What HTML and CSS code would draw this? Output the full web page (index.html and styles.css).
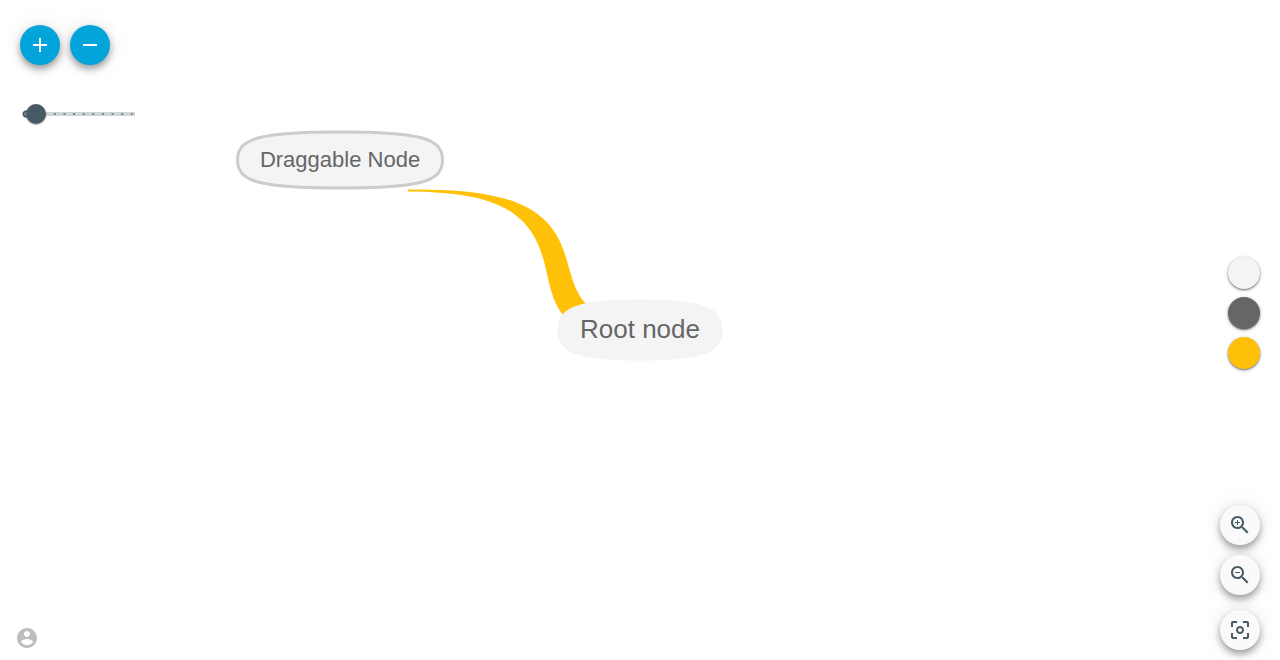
FILE: index.html
```html
<!DOCTYPE html>
<html lang="en">
<head>
<meta charset="utf-8">
<title>Mind map</title>
<meta name="viewport" content="width=device-width, initial-scale=1">
<link rel="stylesheet" href="styles.css">
</head>
<body>
<main class="app">
  <svg class="map" role="img" aria-label="Mind map">
    <svg class="map-origin" x="50%" y="50%">
      <path class="branch" d="M-232 -140.500C-162 -141 -114 -134 -89 -103C-69 -78 -73 -46 -54 -26L-60 0L-77 -15C-94 -37 -90 -62 -104 -90C-123 -128 -166 -138 -232 -138.500Z"/>
      <g class="node">
        <path class="node-shape" d="M-82.500 0C-82.500 -23 -62 -30.500 0 -30.500S82.500 -23 82.500 0S62 30.500 0 30.500S-82.500 23 -82.500 0Z"/>
        <text class="node-text root-text" x="0" y="8">Root node</text>
      </g>
      <g class="node">
        <path class="node-shape selected" d="M-402.500 -170C-402.500 -192 -380 -198 -300 -198S-197.500 -192 -197.500 -170S-220 -142 -300 -142S-402.500 -148 -402.500 -170Z"/>
        <text class="node-text" x="-300" y="-163">Draggable Node</text>
      </g>
    </svg>
  </svg>

  <div class="side left">
    <div class="tools">
      <div class="button-row">
        <button class="fab primary" aria-label="Add node"><svg class="icon" viewBox="0 0 24 24"><path d="M19 13h-6v6h-2v-6H5v-2h6V5h2v6h6v2z"/></svg></button>
        <button class="fab primary" aria-label="Remove node"><svg class="icon" viewBox="0 0 24 24"><path d="M19 13H5v-2h14v2z"/></svg></button>
      </div>
      <div class="slider"><input class="range" type="range" min="0" max="10" step="1" value="0" aria-label="Branch width"></div>
    </div>
    <button class="account" aria-label="Account"><svg class="icon" viewBox="0 0 24 24"><path d="M12 2C6.480 2 2 6.480 2 12s4.480 10 10 10 10-4.480 10-10S17.520 2 12 2zm0 3c1.660 0 3 1.340 3 3s-1.340 3-3 3-3-1.340-3-3 1.340-3 3-3zm0 14.200c-2.500 0-4.710-1.280-6-3.220.030-1.990 4-3.080 6-3.080 1.990 0 5.970 1.090 6 3.080-1.290 1.940-3.500 3.220-6 3.220z"/></svg></button>
  </div>

  <div class="side right">
    <div class="colors">
      <button class="swatch fill" aria-label="Node color"></button>
      <button class="swatch ink" aria-label="Text color"></button>
      <button class="swatch line" aria-label="Branch color"></button>
    </div>
    <div class="zoom">
      <button class="fab" aria-label="Zoom in"><svg class="icon" viewBox="0 0 24 24"><path d="M15.500 14h-.79l-.28-.27C15.410 12.590 16 11.110 16 9.500 16 5.910 13.090 3 9.500 3S3 5.910 3 9.500 5.910 16 9.500 16c1.610 0 3.090-.59 4.230-1.570l.27.28v.79l5 4.990L20.490 19l-4.990-5zm-6 0C7.010 14 5 11.990 5 9.500S7.010 5 9.500 5 14 7.010 14 9.500 11.990 14 9.500 14zM12 10h-2v2H9v-2H7V9h2V7h1v2h2v1z"/></svg></button>
      <button class="fab" aria-label="Zoom out"><svg class="icon" viewBox="0 0 24 24"><path d="M15.500 14h-.79l-.28-.27C15.410 12.590 16 11.110 16 9.500 16 5.910 13.090 3 9.500 3S3 5.910 3 9.500 5.910 16 9.500 16c1.610 0 3.090-.59 4.230-1.570l.27.28v.79l5 4.990L20.490 19l-4.990-5zm-6 0C7.010 14 5 11.990 5 9.500S7.010 5 9.500 5 14 7.010 14 9.500 11.990 14 9.500 14zM7 9h5v1H7z"/></svg></button>
      <button class="fab center" aria-label="Center map"><svg class="icon" viewBox="0 0 24 24"><path d="M5 15H3v4c0 1.100.9 2 2 2h4v-2H5v-4zM5 5h4V3H5c-1.100 0-2 .9-2 2v4h2V5zm14-2h-4v2h4v4h2V5c0-1.100-.9-2-2-2zm0 16h-4v2h4c1.100 0 2-.9 2-2v-4h-2v4zM12 8c-2.210 0-4 1.790-4 4s1.790 4 4 4 4-1.790 4-4-1.790-4-4-4zm0 6c-1.100 0-2-.9-2-2s.9-2 2-2 2 .9 2 2-.9 2-2 2z"/></svg></button>
    </div>
  </div>
</main>
</body>
</html>
```
FILE: styles.css
```css
* {
  box-sizing: border-box;
}

body {
  margin: 0;
  background: #fff;
  font-family: "Liberation Sans", Arial, sans-serif;
}

button {
  padding: 0;
  border: 0;
  cursor: pointer;
}

.app {
  position: relative;
  display: flex;
  justify-content: space-between;
  min-height: 100vh;
  overflow: hidden;
}

/* The map lies under the tools and keeps its origin at the window's centre. */
.map {
  position: absolute;
  inset: 0;
  width: 100%;
  height: 100%;
}

.map-origin {
  overflow: visible;
}

.branch {
  fill: #ffc107;
}

.node-shape {
  fill: #f4f4f4;
}

.node-shape.selected {
  stroke: #ccc;
  stroke-width: 3px;
}

.node-text {
  fill: #666;
  font-size: 22px;
  text-anchor: middle;
}

.root-text {
  font-size: 26px;
}

.side {
  position: relative;
}

.left {
  display: flex;
  flex-direction: column;
  justify-content: space-between;
  padding: 25px 15px 10px;
}

.tools {
  padding-left: 5px;
}

.button-row {
  display: flex;
  gap: 10px;
}

.fab {
  display: flex;
  align-items: center;
  justify-content: center;
  width: 40px;
  height: 40px;
  border-radius: 50%;
  background: #fafafa;
  color: #455a64;
  box-shadow: 0 4px 7px rgba(0, 0, 0, .36), 0 0 20px rgba(0, 0, 0, .1);
}

.primary {
  background: #03a4d9;
  color: #fff;
}

.icon {
  display: block;
  width: 24px;
  height: 24px;
  fill: currentColor;
}

.slider {
  display: flex;
  width: 115px;
  margin-top: 39px;
  padding-left: 6px;
  background: radial-gradient(circle at 6px 50%, #9aa5aa 1px, #455a64 2px, #455a64 3px, transparent 4px);
}

.range {
  width: 100%;
  height: 20px;
  margin: 0;
  padding-right: 2px;
  appearance: none;
  background:
    linear-gradient(90deg, #7b898f 2px, transparent 2px) -1px 50% / 9% 2px repeat-x content-box border-box,
    linear-gradient(#d0d6d8, #d0d6d8) 0 50% / 100% 4px no-repeat border-box;
}

.range::-webkit-slider-thumb {
  width: 20px;
  height: 20px;
  appearance: none;
  border-radius: 50%;
  background: #455a64;
  box-shadow: 0 1px 2px rgba(0, 0, 0, .3);
}

.account {
  width: 24px;
  background: transparent;
  color: #bdbdbd;
}

/* Equal outer rows keep the colours near the middle and the zoom buttons below. */
.right {
  display: grid;
  grid-template-rows: 1fr auto 1fr;
  justify-items: end;
  padding: 10px 20px;
}

.colors {
  display: flex;
  flex-direction: column;
  grid-row: 2;
  gap: 8px;
  padding-bottom: 34px;
}

.swatch {
  width: 32px;
  height: 32px;
  border-radius: 50%;
  box-shadow: 0 1px 2px rgba(0, 0, 0, .5), 0 1px 5px rgba(0, 0, 0, .15);
}

.fill {
  background: #f4f4f4;
}

.ink {
  background: #666;
}

.line {
  background: #ffc107;
}

.zoom {
  display: flex;
  flex-direction: column;
  grid-row: 3;
  align-self: end;
  gap: 10px;
}

.center {
  margin-top: 5px;
}
```
